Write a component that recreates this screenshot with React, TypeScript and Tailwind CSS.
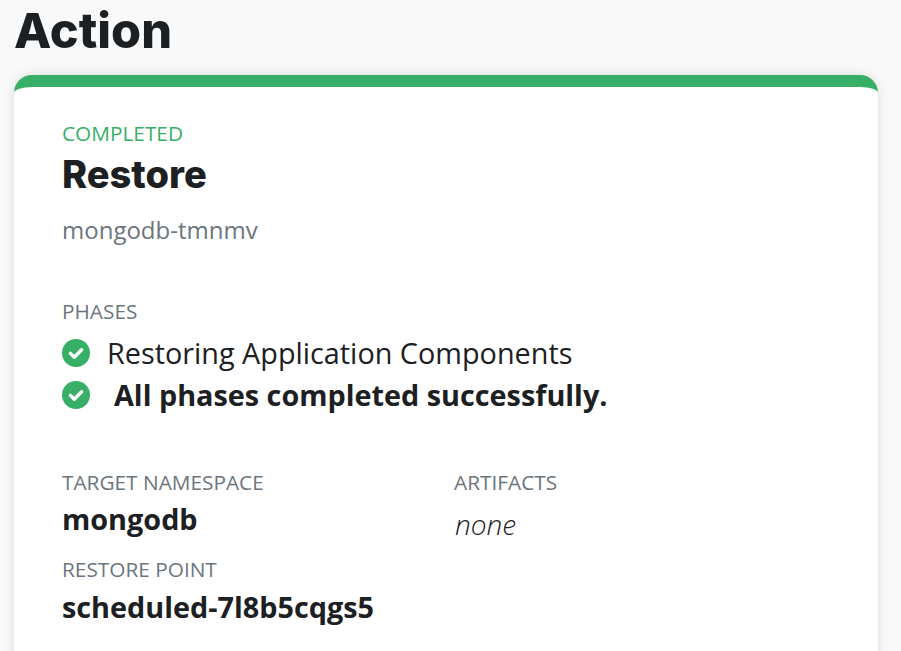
const Check = () => (
  <svg viewBox="0 0 28 28" className="w-[28px] h-[28px] shrink-0">
    <circle cx="14" cy="14" r="14" fill="#38AF66" />
    <path d="M8.4 14.4l3.9 3.8 7.3-7.4" fill="none" stroke="#fff" strokeWidth="3.4" strokeLinecap="round" strokeLinejoin="round" />
  </svg>
);

const Label = ({ children }: { children: string }) => (
  <div className="text-[20.8px] leading-[24px] text-[#6c757d]">{children}</div>
);

export default function App() {
  return (
    <div className="h-[651px] overflow-hidden bg-[#f9f9f9] pl-[14px] pr-[23px] font-['Open_Sans',sans-serif] text-[#1c2023]">
      <h1 className="pt-[3px] h-[75px] font-['Inter',sans-serif] font-extrabold text-[48.6px] leading-[56px]">Action</h1>
      <div className="h-[640px] rounded-[18px] border-t-[12px] border-[#38AF66] bg-white pl-[48px] pt-[34px] shadow-[0_0_12px_rgba(0,0,0,0.12)]">
        <div className="text-[20.8px] leading-[24px] text-[#38AF66]">COMPLETED</div>
        <div className="mt-[8px] font-['Inter',sans-serif] font-extrabold text-[38px] leading-[42px]">Restore</div>
        <div className="mt-[20px] text-[24px] leading-[30px] text-[#6c757d]">mongodb-tmnmv</div>

        <div className="mt-[54px]"><Label>PHASES</Label></div>
        <div className="mt-[13px] flex items-center gap-[17px] h-[34px]">
          <Check />
          <span className="text-[28.8px] leading-[34px]">Restoring Application Components</span>
        </div>
        <div className="mt-[8px] flex items-center gap-[24px] h-[34px]">
          <Check />
          <span className="text-[28.8px] leading-[34px] font-bold">All phases completed successfully.</span>
        </div>

        <div className="mt-[58px] grid grid-cols-[392px_1fr]">
          <div>
            <Label>TARGET NAMESPACE</Label>
            <div className="mt-[7px] text-[28.8px] leading-[36px] font-bold">mongodb</div>
            <div className="mt-[20px]"><Label>RESTORE POINT</Label></div>
            <div className="mt-[8px] text-[28.8px] leading-[36px] font-bold">scheduled-7l8b5cqgs5</div>
          </div>
          <div>
            <Label>ARTIFACTS</Label>
            <div className="mt-[12px] pl-[1px] text-[28px] leading-[36px] italic font-light">none</div>
          </div>
        </div>
      </div>
    </div>
  );
}
